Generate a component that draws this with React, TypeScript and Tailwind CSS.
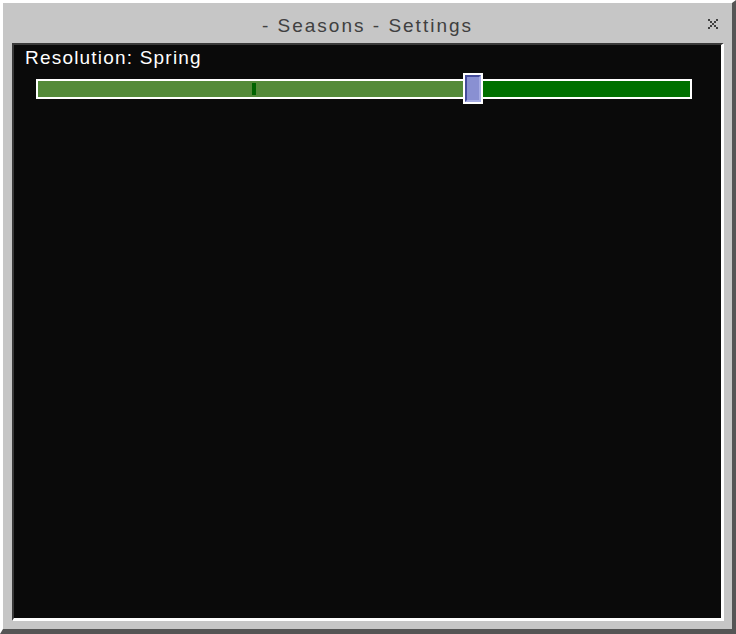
const CloseIcon = () => (
  <svg width="10" height="10" viewBox="0 0 10 10" shapeRendering="crispEdges" fill="#404040">
    <rect x="0" y="0" width="2" height="2" />
    <rect x="8" y="0" width="2" height="2" />
    <rect x="2" y="2" width="2" height="2" />
    <rect x="6" y="2" width="2" height="2" />
    <rect x="4" y="4" width="2" height="2" />
    <rect x="2" y="6" width="2" height="2" />
    <rect x="6" y="6" width="2" height="2" />
    <rect x="0" y="8" width="2" height="2" />
    <rect x="8" y="8" width="2" height="2" />
  </svg>
)

const SeasonSlider = () => (
  <div className="relative ml-[11px] h-[31px] w-[656px]">
    <div className="absolute top-[6px] left-0 flex h-[20px] w-[656px] border-2 border-white">
      <div className="h-full w-[435px] bg-[#548a39]" />
      <div className="h-full flex-1 bg-[#007000]" />
      <div className="absolute top-[2px] left-[214px] h-[12px] w-[4px] bg-[#006400]" />
    </div>
    <div className="absolute top-0 left-[427px] h-[31px] w-[20px] border-2 border-white">
      <div className="h-full w-full border-t-2 border-l-2 border-r-2 border-b-2 border-t-[#454c9c] border-l-[#454c9c] border-r-[#a6ace4] border-b-[#a6ace4] bg-[#8990d2]" />
    </div>
  </div>
)

export default function App() {
  return (
    <div
      className="flex h-[634px] w-[736px] flex-col border-t-[3px] border-l-[3px] border-r-4 border-b-[5px] border-t-white border-l-white border-r-[#555555] border-b-[#555555] bg-[#c6c6c6]"
      style={{ fontFamily: '"Liberation Sans", Arial, sans-serif' }}
    >
      <div className="relative flex h-[40px] shrink-0 items-start justify-center pt-[13px]">
        <span className="text-[19px] leading-[20px] tracking-[2px] text-[#404040]">
          - Seasons - Settings
        </span>
        <div className="absolute top-[16px] right-[14px]">
          <CloseIcon />
        </div>
      </div>
      <div className="mr-[8px] mb-[8px] ml-[9px] flex-1 border-t-2 border-l-2 border-r-[3px] border-b-[3px] border-t-[#3a3a3a] border-l-[#3a3a3a] border-r-white border-b-white bg-[#0a0a0a] pl-[11px]">
        <div className="pt-[3px] text-[19px] leading-[20px] tracking-[1.2px] text-white">
          Resolution: Spring
        </div>
        <div className="mt-[5px]">
          <SeasonSlider />
        </div>
      </div>
    </div>
  )
}
